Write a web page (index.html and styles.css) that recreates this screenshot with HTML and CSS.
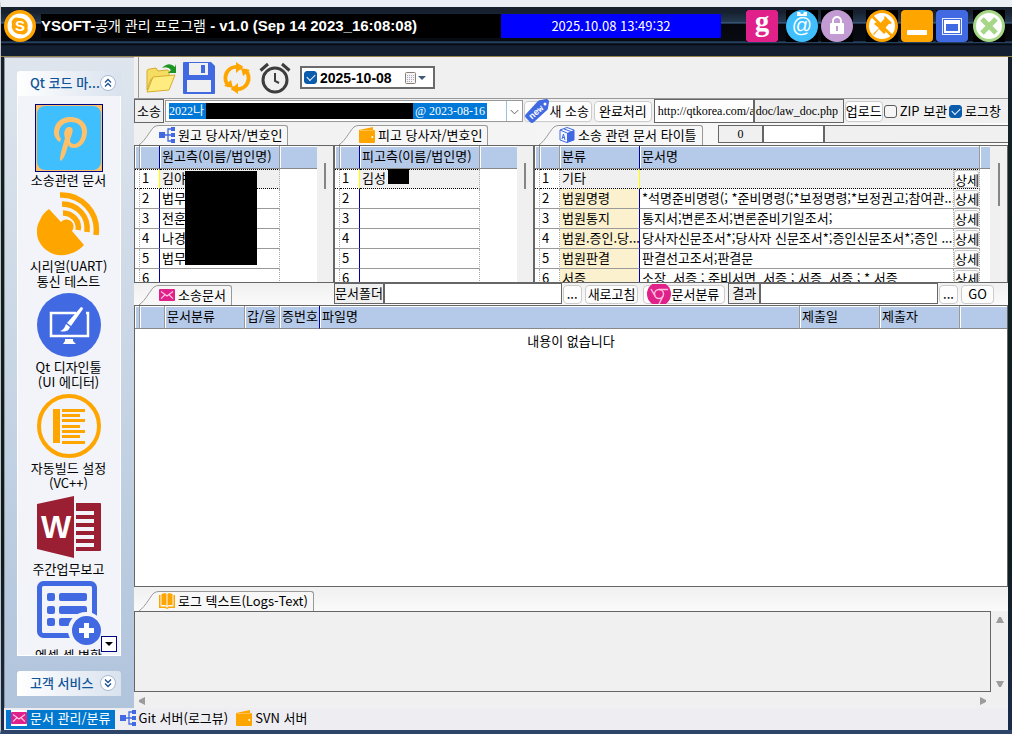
FILE: index.html
```html
<!DOCTYPE html>
<html lang="ko">
<head>
<meta charset="utf-8">
<title>YSOFT-공개 관리 프로그램</title>
<link rel="stylesheet" href="styles.css">
</head>
<body>
<svg class="defs" aria-hidden="true">
  <symbol id="i-tree" viewBox="0 0 16 16"><path fill="#4169e1" d="M0 5h6v6H0zM12 0h4v4h-4zM12 6h4v4h-4zM12 12h4v4h-4z"/><path fill="none" stroke="#4169e1" stroke-width="1.3" d="M6 8h6M12 2H9v12h3"/></symbol>
  <symbol id="i-wallet" viewBox="0 0 16 16"><path fill="#ffa500" d="M0 3 14 0v3h1q1 0 1 1v11q0 1-1 1H1q-1 0-1-1z"/><path stroke="#fff" stroke-width=".6" d="M1 3.6h13" opacity=".6"/><circle cx="13.3" cy="10" r="1" fill="#fff"/></symbol>
  <symbol id="i-mail" viewBox="0 0 16 12"><rect width="16" height="12" rx="1" fill="#e0218a"/><path fill="none" stroke="#ffc9e6" stroke-width="1.1" d="m2 2.500 6 4.500 6-4.500M2 9.700 5.700 6M14 9.700 10.300 6"/></symbol>
  <symbol id="i-book" viewBox="0 0 16 16"><path fill="#ffa500" d="M0 2h1.500v11.500H7L8 15l1-1.500h5.500V2H16v13h-6l-2 1-2-1H0zM2.500 1 6 0l1.500 1v11.500L6 12H2.500zM8.500 1 10 0l3.500 1v11H10l-1.500.5z"/></symbol>
  <symbol id="i-slope" viewBox="0 0 20 20"><path fill="#f7f7f7" d="M0 20C7 15 12 4 15 2q2-1.500 5-1.500V20z"/><path fill="none" stroke="#999" d="M0 20C7 15 12 4 15 2q2-1.500 5-1.500"/></symbol>
</svg>
<div class="window">
  <header class="titlebar">
    <svg class="ic32" viewBox="0 0 32 32"><circle cx="16" cy="16" r="16" fill="#ffa500"/><circle cx="16" cy="16" r="12.500" fill="#fff"/><path fill="#ffa500" d="M8 14a5 5 0 0 1 7-6 8 8 0 0 1 8.500 10 5 5 0 0 1-7 6A8 8 0 0 1 8 14z"/><text x="16" y="21" text-anchor="middle" class="skype">S</text></svg>
    <h1 class="title">YSOFT-<span class="ko">공개 관리 프로그램</span> - v1.0 (Sep 14 2023_16:08:08)</h1>
    <time class="clock">2025.10.08 13:49:32</time>
    <div class="sys">
      <button class="sb" aria-label="Google"><svg class="ic32" viewBox="0 0 32 32"><rect width="32" height="32" rx="3" fill="#e0218a"/><text x="16" y="21" text-anchor="middle" class="gee">g</text></svg></button>
      <button class="sb gap-s" aria-label="메일"><svg class="ic32" viewBox="0 0 32 32"><circle cx="16" cy="16" r="16" fill="#40bfff"/><path fill="#fff" d="M11 2h3l1 2h2l1-2h3v4H11z"/><circle cx="16" cy="17" r="11" fill="#40bfff"/><text x="16" y="22" text-anchor="middle" class="at">@</text></svg></button>
      <button class="sb gap-l" aria-label="잠금"><svg class="ic32" viewBox="0 0 32 32"><circle cx="16" cy="16" r="16" fill="#c39bd3"/><path fill="none" stroke="#fff" stroke-width="2" d="M12 13v-2a4 4 0 0 1 8 0v2"/><rect x="9" y="13" width="14" height="11" rx="1" fill="#fff"/><path stroke="#c39bd3" stroke-width="2" d="M16 16v5"/></svg></button>
      <button class="sb gap-p" aria-label="고정"><svg class="ic32" viewBox="0 0 32 32"><circle cx="16" cy="16" r="14.500" fill="#fff" stroke="#ffa500" stroke-width="3"/><path stroke="#ffa500" stroke-width="2.500" d="m5 5 22 22"/><path fill="#ffa500" d="m19 6 7 7-2 1-1-.3-3.500 4 .3 4.800L18 24l-5-5-5 6-1-1 6-6-5-4 1.500-1.500 5 .5 4-4.500-.5-1z"/></svg></button>
      <button class="sb gap-l" aria-label="최소화"><svg class="ic32" viewBox="0 0 32 32"><rect width="32" height="32" rx="4" fill="#ffa500"/><rect x="6" y="20" width="20" height="5" rx="1" fill="#fff"/></svg></button>
      <button class="sb gap-l" aria-label="최대화"><svg class="ic32" viewBox="0 0 32 32"><rect width="32" height="32" rx="4" fill="#4169e1"/><rect x="6.500" y="8.500" width="19" height="16" fill="none" stroke="#e8eeff"/><path fill="#fff" d="M8 10h16v13H8zM10 14v7h12v-7z" fill-rule="evenodd"/></svg></button>
      <button class="sb gap-m" aria-label="닫기"><svg class="ic32" viewBox="0 0 32 32"><circle cx="16" cy="16" r="14.500" fill="#fff" stroke="#a5d787" stroke-width="3"/><path stroke="#a5d787" stroke-width="5" d="m9 9 14 14M23 9 9 23"/></svg></button>
    </div>
  </header>

  <div class="work">
    <aside class="side">
      <section class="group grow">
        <h2 class="ghead">Qt 코드 마...<button class="round" aria-label="접기"><svg viewBox="0 0 16 16"><circle cx="8" cy="8" r="7.500" fill="#fff" stroke="#a9b9d2"/><path fill="none" stroke="#1d4f91" stroke-width="1.300" d="m5 7.500 3-3 3 3M5 11.500l3-3 3 3"/></svg></button></h2>
        <nav class="items">
          <a class="item" href="#"><svg class="ic64 sel" viewBox="0 0 64 64"><rect width="64" height="64" fill="#ffc06a"/><rect width="64" height="64" rx="8" fill="#40bfff"/><path fill="#ffc06a" d="M23 36c-4-2-6-6-6-10 0-8 6-15 16-15s17 6 17 14c0 10-6 17-13 17-3 0-5-1-6-3-2 8-3 12-7 16l-1-1c0-6 3-14 5-22-2-5 0-11 4-11 7 0 2 9 1 13 0 3 2 4 4 4 5 0 8-6 8-12 0-6-4-10-11-10-8 0-12 5-12 11 0 3 1 4 2 6z"/></svg>소송관련 문서</a>
          <a class="item" href="#"><svg class="ic64" viewBox="0 0 64 64"><path fill="#ffa500" d="m12 17 12 13a7 7 0 0 1 11 9l12 14c-8 9-22 13-33 8C1 55-4 40 3 28c2-5 5-8 9-11z"/><g fill="none" stroke="#ffa500" stroke-width="5.500"><path d="M23 3c22-1 39 18 36 40"/><path d="M25 12c15 0 27 12 25 28"/><path d="M26 21c9 0 17 8 15 17"/></g></svg>시리얼(UART)<br>통신 테스트</a>
          <a class="item" href="#"><svg class="ic64" viewBox="0 0 64 64"><circle cx="32" cy="32" r="32" fill="#4169e1"/><path fill="none" stroke="#fff" stroke-width="2.500" d="M39 20H14v23h37V20h-2"/><path fill="#fff" d="M28 46h8v2l3 3H26l2-3zM44 14q2 0 2 2L34 33l-4-3zM29 31l4 3q-2 6-10 4 4-1 6-7z"/></svg>Qt 디자인툴<br>(UI 에디터)</a>
          <a class="item" href="#"><svg class="ic64" viewBox="0 0 64 64"><circle cx="32" cy="32" r="30" fill="none" stroke="#ffa500" stroke-width="4"/><path fill="#ffa500" d="M16 15h7v34h-7zM25 15h23v3H25zM25 20h18v3H25zM25 25h23v3H25zM25 31h18v3H25zM25 36h23v3H25zM25 41h18v3H25zM25 47h23v3H25z"/></svg>자동빌드 설정<br>(VC++)</a>
          <a class="item" href="#"><svg class="ic64" viewBox="0 0 64 64"><path fill="#9b1f33" d="m0 9 37-8v62L0 54zM39 8h24q1 0 1 1v46q0 1-1 1H39z"/><path fill="#f2f4f9" d="M39 16h18v4H39zM39 24h18v4H39zM39 32h18v4H39zM39 40h18v4H39zM39 48h18v4H39z"/><text x="19" y="43" text-anchor="middle" class="dub">W</text></svg>주간업무보고</a>
          <a class="item" href="#"><svg class="ic64" viewBox="0 0 64 64"><rect x="2.500" y="2.500" width="55" height="52" rx="4" fill="none" stroke="#4169e1" stroke-width="5"/><path fill="#4169e1" d="M12 12h4q2 0 2 2v4q0 2-2 2h-4q-2 0-2-2v-4q0-2 2-2zM24 12h24q2 0 2 2v4q0 2-2 2H24q-2 0-2-2v-4q0-2 2-2zM12 25h4q2 0 2 2v4q0 2-2 2h-4q-2 0-2-2v-4q0-2 2-2zM24 25h24q2 0 2 2v4q0 2-2 2H24q-2 0-2-2v-4q0-2 2-2zM12 37h4q2 0 2 2v4q0 2-2 2h-4q-2 0-2-2v-4q0-2 2-2zM24 37h12v8H24q-2 0-2-2v-4q0-2 2-2z"/><circle cx="49" cy="49" r="18" fill="#f2f4f9"/><circle cx="49.500" cy="49.500" r="14.500" fill="#4169e1"/><path stroke="#fff" stroke-width="5" d="M42 49.500h15M49.500 42v15"/></svg>엑셀 셀 변환</a>
        </nav>
        <button class="more" aria-label="더 보기"><svg viewBox="0 0 14 14"><path d="M3 5h8l-4 4z"/></svg></button>
      </section>
      <h2 class="ghead lone">고객 서비스<button class="round" aria-label="펼치기"><svg viewBox="0 0 16 16"><circle cx="8" cy="8" r="7.500" fill="#fff" stroke="#a9b9d2"/><path fill="none" stroke="#1d4f91" stroke-width="1.300" d="m5 4.500 3 3 3-3M5 8.500l3 3 3-3"/></svg></button></h2>
    </aside>

    <main class="main">
      <div class="toolbar">
        <button class="tb" aria-label="열기"><svg class="ic32" viewBox="0 0 32 32"><path fill="#f5dc62" stroke="#d6ad2c" d="M2 28V9q0-2 3-2l6-1 2 3 9-1q2 0 2 2v5L6 17z"/><path fill="#ffec80" stroke="#d6ad2c" d="m2 30 6-15 22-2-6 15z"/><path fill="#1d9522" d="M17 6q7-7 13-1l1-3v9h-8l3-3q-3-4-9-2z"/></svg></button>
        <button class="tb" aria-label="저장"><svg class="ic32" viewBox="0 0 32 32"><path fill="#4169e1" d="M1 0h27l4 4v27q0 1-1 1H1q-1 0-1-1V1q0-1 1-1z"/><path fill="#f0f0f0" d="M6 1h19v12H6zM4 18h24v12H4z"/><path fill="#4169e1" d="M18 3h4v8h-4z"/></svg></button>
        <button class="tb" aria-label="새로고침"><svg class="ic32" viewBox="0 0 32 32"><g fill="none" stroke="#ffa500" stroke-width="4"><path d="M17 5A11 11 0 0 0 8 24M15 27a11 11 0 0 0 9-19"/><path d="M17 5a11 11 0 0 1 4 1M15 27a11 11 0 0 1-4-1"/></g><path fill="#ffa500" d="m15 0 7 5-7 6zM17 21v11l-7-5zM20 6l9 2-7 6zM12 26l-9-2 7-6z"/></svg></button>
        <button class="tb" aria-label="알람"><svg class="ic32" viewBox="0 0 32 32"><g fill="none" stroke="#3d3d3d" stroke-width="3"><circle cx="16" cy="18" r="12"/><path d="M1.500 8.500 9 2M30.500 8.500 23 2"/><path stroke-width="2" d="M16 11v8l4 2"/></g></svg></button>
        <div class="datebox"><input type="checkbox" class="chk" checked aria-label="날짜 사용"><input class="date" value="2025-10-08" aria-label="날짜"><svg class="cal" viewBox="0 0 22 12"><rect x=".5" y=".5" width="10" height="11" rx="1" fill="#f4f4f6" stroke="#8a8076"/><path stroke="#aab" stroke-dasharray="1 1" d="M2 3.500h7M2 5.500h7M2 7.500h7M2 9.500h5"/><path fill="#40587c" d="M13 4h8l-4 4z"/></svg></div>
      </div>

      <div class="caserow">
        <label class="tag" for="case">소송</label>
        <div class="combo"><select id="case" class="combosel"><option></option></select>
          <span class="combotext"><span class="hl">2022나</span><span class="ink"></span><span class="hl">@ 2023-08-16</span></span>
          <svg class="chev" viewBox="0 0 16 20"><path fill="none" stroke="#555" d="m4 9 4 4 4-4"/></svg></div>
        <button class="btn"><svg class="newtag" viewBox="0 0 24 24"><path fill="#4169e1" d="m1 15 12-13q1-1 3-1l5-1q3 0 3 3l-1 6q0 2-2 3L9 23q-2 2-4 0l-4-4q-2-2 0-4z"/><circle cx="20" cy="5" r="1.500" fill="#fff"/><text x="11" y="16" text-anchor="middle" transform="rotate(-42 11 13)" class="neu">new</text></svg>새 소송</button>
        <button class="btn pad">완료처리</button>
        <input class="url" value="http://qtkorea.com/a" aria-label="주소">
        <span class="path">doc/law_doc.php</span>
        <button class="btn tight">업로드</button>
        <label class="opt"><input type="checkbox" class="chk">ZIP 보관</label>
        <label class="opt"><input type="checkbox" class="chk" checked>로그창</label>
      </div>

      <div class="tabs3">
        <h3 class="tab"><svg class="slope"><use href="#i-slope"/></svg><span class="tabin"><svg class="ic16"><use href="#i-tree"/></svg>원고 당사자/변호인</span></h3>
        <h3 class="tab"><svg class="slope"><use href="#i-slope"/></svg><span class="tabin"><svg class="ic16"><use href="#i-wallet"/></svg>피고 당사자/변호인</span></h3>
        <h3 class="tab"><svg class="slope"><use href="#i-slope"/></svg><span class="tabin"><svg class="ic16" viewBox="0 0 16 16"><path fill="#f4f7ff" stroke="#4169e1" d="m1 3 7-2.500L15 3v10l-7 2.500L1 13z"/><path fill="#4169e1" d="m8 6 7-3v10l-7 2.500z"/><path fill="none" stroke="#4169e1" d="m1 3 7 3M4.500 7 3 12M4.500 7 6 13M3.500 10.500h2M5 2l7 2.500"/></svg>소송 관련 문서 타이틀</span></h3>
        <div class="counter"><span class="num">0</span><input class="numin" aria-label="값"><span class="rest"></span></div>
      </div>

      <div class="grids">
        <div class="pane">
          <table class="grid"><colgroup><col class="c0"><col class="c1"><col class="c120"><col></colgroup>
            <thead><tr><th></th><th class="nv"></th><th>원고측(이름/법인명)</th><th></th></tr></thead>
            <tbody>
              <tr class="cur"><td></td><td class="nv">1</td><td>김야</td><td></td></tr>
              <tr><td></td><td class="nv">2</td><td>법무</td><td></td></tr>
              <tr><td></td><td class="nv">3</td><td>전훈</td><td></td></tr>
              <tr><td></td><td class="nv">4</td><td>나경</td><td></td></tr>
              <tr><td></td><td class="nv">5</td><td>법무</td><td></td></tr>
              <tr><td></td><td class="nv">6</td><td></td><td></td></tr>
            </tbody></table>
          <div class="vbar"><i class="thumb"></i></div>
          <span class="mask big"></span>
        </div>
        <div class="pane">
          <table class="grid"><colgroup><col class="c0"><col class="c1"><col class="c120"><col></colgroup>
            <thead><tr><th></th><th class="nv"></th><th>피고측(이름/법인명)</th><th></th></tr></thead>
            <tbody>
              <tr class="cur"><td></td><td class="nv">1</td><td>김성</td><td></td></tr>
              <tr><td></td><td class="nv">2</td><td></td><td></td></tr>
              <tr><td></td><td class="nv">3</td><td></td><td></td></tr>
              <tr><td></td><td class="nv">4</td><td></td><td></td></tr>
              <tr><td></td><td class="nv">5</td><td></td><td></td></tr>
              <tr><td></td><td class="nv">6</td><td></td><td></td></tr>
            </tbody></table>
          <div class="vbar"><i class="thumb"></i></div>
          <span class="mask small"></span>
        </div>
        <div class="pane">
          <table class="grid"><colgroup><col class="c0"><col class="c1"><col class="c80"><col><col class="c26"><col class="c10"></colgroup>
            <thead><tr><th></th><th></th><th class="nv">분류</th><th colspan="2">문서명</th><th></th></tr></thead>
            <tbody>
              <tr class="cur"><td></td><td>1</td><td class="nv">기타</td><td></td><td class="act"><button class="mini">상세</button></td><td></td></tr>
              <tr><td></td><td>2</td><td class="nv cat">법원명령</td><td>*석명준비명령(; *준비명령(;*보정명령;*보정권고;참여관...</td><td class="act"><button class="mini">상세</button></td><td></td></tr>
              <tr><td></td><td>3</td><td class="nv cat">법원통지</td><td>통지서;변론조서;변론준비기일조서;</td><td class="act"><button class="mini">상세</button></td><td></td></tr>
              <tr><td></td><td>4</td><td class="nv cat">법원.증인.당...</td><td>당사자신문조서*;당사자 신문조서*;증인신문조서*;증인 ...</td><td class="act"><button class="mini">상세</button></td><td></td></tr>
              <tr><td></td><td>5</td><td class="nv cat">법원판결</td><td>판결선고조서;판결문</td><td class="act"><button class="mini">상세</button></td><td></td></tr>
              <tr><td></td><td>6</td><td class="nv cat">서증</td><td>소장&nbsp; 서증 ; 준비서면&nbsp; 서증 ; 서증&nbsp; 서증 ; * 서증</td><td class="act"><button class="mini">상세</button></td><td></td></tr>
            </tbody></table>
          <div class="vbar wide"><i class="thumb tall"></i></div>
        </div>
      </div>

      <div class="docrow">
        <h3 class="tab first"><svg class="slope"><use href="#i-slope"/></svg><span class="tabin"><svg class="ic16"><use href="#i-mail"/></svg>소송문서</span></h3>
        <label class="tag" for="folder">문서폴더</label><input id="folder" class="field">
        <button class="btn dots">...</button>
        <button class="btn">새로고침</button>
        <button class="btn chromebtn"><svg class="chrome" viewBox="0 2 24 20"><circle cx="12" cy="12" r="12" fill="#e0218a"/><g fill="none" stroke="#fbd" stroke-width="1.500"><circle cx="12" cy="12" r="4.500"/><path d="M12 7.500h9M8 14 4 7M16 14l-4 8"/></g></svg>문서분류</button>
        <label class="tag res" for="result">결과</label><input id="result" class="field">
        <button class="btn dots">...</button>
        <button class="btn go">GO</button>
      </div>

      <div class="docs">
        <table class="grid"><colgroup><col class="c0"><col class="c25"><col class="c80"><col class="c35"><col class="c40"><col><col class="c80"><col class="c80"><col class="c47"></colgroup>
          <thead><tr><th></th><th></th><th>문서분류</th><th>갑/을</th><th class="nv">증번호</th><th>파일명</th><th>제출일</th><th>제출자</th><th></th></tr></thead></table>
        <p class="empty">내용이 없습니다</p>
      </div>

      <h3 class="tab logtab"><svg class="slope"><use href="#i-slope"/></svg><span class="tabin"><svg class="ic16"><use href="#i-book"/></svg>로그 텍스트(Logs-Text)</span></h3>
      <div class="log">
        <textarea class="logtext" readonly aria-label="로그"></textarea>
        <div class="arrows"><svg class="arr" viewBox="0 0 10 8"><path fill="#9c9c9c" d="M1 7h8L6 1H4z"/></svg><svg class="arr" viewBox="0 0 10 8"><path fill="#9c9c9c" d="M1 1h8L6 7H4z"/></svg></div>
      </div>
      <div class="hbar"><svg class="arr" viewBox="0 0 10 8"><path fill="#9c9c9c" d="M8 0v8L2 5V3z"/></svg><svg class="arr" viewBox="0 0 10 8"><path fill="#9c9c9c" d="M2 0v8l6-3V3z"/></svg></div>
    </main>
  </div>
  <nav class="foot">
    <a class="ft on" href="#"><svg class="ic16 boxed"><use href="#i-mail"/></svg>문서 관리/분류</a>
    <a class="ft" href="#"><svg class="ic16"><use href="#i-tree"/></svg>Git 서버(로그뷰)</a>
    <a class="ft" href="#"><svg class="ic16"><use href="#i-wallet"/></svg>SVN 서버</a>
  </nav>
</div>
</body>
</html>
```
FILE: styles.css
```css
* { box-sizing: border-box; }
body {
  margin: 0;
  background: #16222e;
  color: #000;
  font: 13px/16px "Noto Sans CJK KR", "Noto Sans", sans-serif;
}
button, input, select, textarea { font: inherit; color: inherit; margin: 0; padding: 0; }
button { border: 0; background: none; white-space: nowrap; }
h1, h2, h3, p { margin: 0; font-size: inherit; font-weight: 400; }
a { color: inherit; text-decoration: none; }
svg { display: block; flex: none; }
.defs { position: absolute; width: 0; height: 0; }

.window {
  display: flex;
  flex-direction: column;
  height: 100vh;
  border-top: 7px solid #eaeff6;
  border-left: 1px solid #c4c4c8;
  border-bottom: 4px solid #2c4568;
  padding-right: 4px;
  background: linear-gradient(#16202f, #11201f 30%, #0e1c1e 75%, #1a2c4c);
}
.ic16 { width: 16px; height: 16px; }
.ic32 { width: 32px; height: 32px; }
.ic64 { width: 64px; height: 64px; }

.titlebar {
  display: flex;
  align-items: flex-start;
  flex: none;
  height: 50px;
  margin-right: -4px;
  padding: 3px 7px 0 3px;
  border-bottom: 1px solid #94834d;
  background: linear-gradient(#16202f 0 5px, #25384f 15px, #446c96 16px, #05070c 17px, #080b12 34px, #31557e 35px, #02050a 37px, #151f32 39px, #151f32);
}
.title {
  flex: 0 1 460px;
  margin: 4px 0 0 5px;
  background: #000;
  color: #fff;
  font: bold 15px/24px "Liberation Sans", "Noto Sans CJK KR", sans-serif;
  white-space: nowrap;
}
.ko { font-size: 14px; font-weight: 400; }
.clock {
  flex: 0 1 220px;
  margin-top: 4px;
  background: #00f;
  color: #fff;
  line-height: 24px;
  text-align: center;
}
.sys { display: flex; margin-left: auto; }
.sb { background: #000; }
.gap-s { margin-left: 8px; }
.gap-l { margin-left: 3px; }
.gap-m { margin-left: 5px; }
.gap-p { margin-left: 13px; }
.skype { font: bold 15px "Liberation Sans", sans-serif; fill: #fff; }
.gee { font: bold 29px/1 "Liberation Serif", serif; fill: #fff; }
.at { font: 20px/1 "Liberation Sans", sans-serif; fill: #fff; }
.dub { font: bold 32px "Liberation Sans", sans-serif; fill: #fff; }
.neu { font: bold 9px "Liberation Mono", monospace; fill: #fff; }

.work { display: flex; flex: 1; min-height: 0; margin-left: 3px; }
.side {
  display: flex;
  flex-direction: column;
  flex: none;
  gap: 15px;
  width: 130px;
  padding: 13px 13px 12px 12px;
  border-left: 1px solid #8e959d;
  border-top: 1px solid #aab;
  background: linear-gradient(#dee5ed, #b0c4dc);
}
.group { position: relative; display: flex; flex-direction: column; min-height: 0; }
.grow { flex: 1; }
.ghead {
  display: flex;
  align-items: center;
  justify-content: space-between;
  flex: none;
  height: 25px;
  padding: 0 5px 1px 13px;
  border-radius: 3px 3px 0 0;
  background: linear-gradient(90deg, #fff, #d9e2ee);
  color: #10549a;
  font-weight: 500;
  white-space: nowrap;
}
.round { flex: none; width: 16px; height: 16px; }
.items {
  flex: 1;
  min-height: 0;
  padding: 10px 1px 0 0;
  overflow: hidden;
  border: 1px solid #fff;
  border-top: 0;
  background: #f2f4f9;
}
.item {
  display: block;
  margin-bottom: 5px;
  line-height: 15px;
  text-align: center;
  white-space: nowrap;
}
.item .ic64 { margin: 0 auto 2px; }
.sel { outline: 1px solid #000080; outline-offset: 1px; box-shadow: 0 0 0 1px #ffc06a; }
.more {
  position: absolute;
  right: 4px;
  bottom: 4px;
  width: 16px;
  height: 16px;
  border: 1px solid #000080;
  background: #fff;
}

.main { display: flex; flex-direction: column; flex: 1; min-width: 0; background: #f0f0f0; }
.toolbar {
  display: flex;
  align-items: center;
  gap: 6px;
  flex: none;
  height: 41px;
  padding-left: 6px;
  margin-left: 4px;
  border-left: 1px solid #999;
}
.datebox {
  display: flex;
  align-items: center;
  gap: 3px;
  width: 135px;
  height: 23px;
  margin-left: 3px;
  padding: 0 6px 0 2px;
  border: 2px solid #6b6b6b;
  background: #fff;
}
.date { flex: 1; min-width: 0; border: 0; font: bold 14px/16px "Liberation Sans", sans-serif; }
.cal { width: 22px; height: 12px; }
.chk {
  appearance: none;
  flex: none;
  width: 13px;
  height: 13px;
  border: 1px solid #5c5c5c;
  border-radius: 3px;
  background: #f6f6f6;
}
.chk:checked { border-color: #0b5cad; background: #0b5cad; display: grid; place-items: center; }
.chk:checked::after {
  content: "";
  width: 7px;
  height: 4px;
  border: solid #fff;
  border-width: 0 0 1px 1px;
  transform: translateY(-1px) rotate(-45deg);
}

.caserow {
  display: flex;
  align-items: center;
  gap: 1px;
  flex: none;
  height: 25px;
  border-top: 1px solid #999;
  white-space: nowrap;
}
.tag {
  display: flex;
  align-items: center;
  justify-content: center;
  flex: none;
  align-self: stretch;
  padding: 0 2px;
  border: 1px solid #666;
  background: #f0f0f0;
}
.combo { position: relative; flex: 1; min-width: 0; height: 22px; border: 1px solid #999; background: #fff; }
.combosel { position: absolute; inset: 0; width: 100%; height: 100%; appearance: none; border: 0; background: none; }
.combotext {
  display: flex;
  align-items: center;
  position: relative;
  width: 321px;
  height: 100%;
  padding-left: 3px;
  pointer-events: none;
  font: 12px/16px "Liberation Serif", "Noto Sans CJK KR", serif;
}
.hl { padding-right: 2px; background: #0078d7; color: #fff; }
.hl:last-child { padding: 0 2px; }
.ink { flex: 1; height: 16px; background: #000; }
.chev { position: absolute; right: 0; top: 0; width: 16px; height: 20px; border-left: 1px solid #9ec3d6; pointer-events: none; }
.btn {
  display: flex;
  align-items: center;
  justify-content: center;
  flex: none;
  height: 21px;
  padding: 0 2px 1px;
  border: 1px solid #ccc;
  border-radius: 4px;
  background: #fdfdfd;
}
.pad { margin: 0 1px; padding: 0 4px 1px; }
.tight { padding: 0 0 1px; }
.newtag { width: 24px; height: 24px; margin-left: -2px; }
.url, .path {
  flex: none;
  align-self: stretch;
  width: 100px;
  border: 1px solid #666;
  font: 12px/22px "Liberation Serif", serif;
}
.url { padding-left: 3px; background: #fff; }
.path { width: 90px; margin-left: -1px; padding-left: 1px; }
.opt { display: flex; align-items: center; gap: 3px; flex: none; margin-right: 1px; }
.opt:last-child { margin-right: 7px; }

.tabs3 {
  display: grid;
  grid-template-columns: 200px 200px 180px 1fr;
  align-items: end;
  flex: none;
  height: 22px;
  background: linear-gradient(90deg, #f0f0f0, #fafafa);
}
.tab { display: flex; height: 20px; padding-left: 5px; }
.slope { width: 20px; height: 20px; }
.tabin {
  display: flex;
  align-items: center;
  gap: 3px;
  padding: 0 5px 1px 0;
  border-top: 1px solid #999;
  border-right: 1px solid #999;
  border-radius: 0 3px 0 0;
  background: #f7f7f7;
  white-space: nowrap;
}
.counter { display: flex; align-self: start; height: 18px; margin: 2px 0 0 4px; }
.num, .numin, .rest { border: 1px solid #666; background: #f0f0f0; }
.num { width: 45px; text-align: center; font: 12px/16px "Liberation Serif", serif; }
.numin { width: 61px; background: #fff; }
.rest { flex: 1; border-right: 0; }

.grids { display: grid; grid-template-columns: 200px 200px 1fr; flex: none; height: 138px; }
.pane {
  position: relative;
  display: flex;
  min-width: 0;
  overflow: hidden;
  border: 1px solid #666;
  background: #fff;
}
.grid { flex: 1; width: 100%; min-width: 0; align-self: flex-start; table-layout: fixed; border-collapse: separate; border-spacing: 0; }
.c0 { width: 5px; }
.c1 { width: 20px; }
.c10 { width: 10px; }
.c25 { width: 25px; }
.c26 { width: 26px; }
.c35 { width: 35px; }
.c40 { width: 40px; }
.c47 { width: 47px; }
.c80 { width: 80px; }
.c120 { width: 120px; }
.grid th {
  height: 23px;
  padding: 0 2px 2px;
  border-right: 1px solid #999;
  border-bottom: 1px solid #888;
  box-shadow: inset 1px 1px #fff;
  background: #b5cae8;
  font-weight: 400;
  text-align: left;
  white-space: nowrap;
}
.grid th:last-child { border-right: 0; }
.grid td {
  height: 20px;
  padding: 0 2px 2px;
  border-right: 1px dotted #aaa;
  border-bottom: 1px solid #999;
  line-height: 16px;
  white-space: nowrap;
  overflow: hidden;
}
.grid td:last-child { border: 0; background: #fff; }
.grid td.cat { background: #fbf1cf; }
.grid th.nv, .grid td.nv { border-right: 1px solid #0000b0; }
.grid .cur td { border-top: 1px dotted #000; border-bottom: 1px dotted #000; background: #f0f0f0; }
.grid .cur td:nth-child(-n+2), .grid .cur td:last-child { background: #fff; }
.grid .cur td:last-child { border: 0; }
.grid .cur td.nv { border-right-color: #ff0; }
.grid td.act { padding: 0; }
.mini { display: block; width: 25px; height: 18px; border: 1px solid #ccc; border-radius: 3px; background: #fdfdfd; line-height: 15px; }
.vbar { flex: none; width: 16px; background: #f0f0f0; }
.wide { width: 17px; }
.thumb { display: block; width: 2px; height: 26px; margin: 17px 0 0 7px; background: #858585; }
.tall { height: 43px; margin-left: 8px; }
.mask { position: absolute; background: #000; }
.big { left: 50px; top: 25px; width: 72px; height: 94px; }
.small { left: 53px; top: 23px; width: 21px; height: 15px; }

.docrow {
  display: flex;
  align-items: center;
  flex: none;
  height: 22px;
  padding-right: 14px;
  background: linear-gradient(#f0f0f0, #fafafa);
}
.first { flex: none; width: 200px; align-self: flex-end; }
.docrow .tag, .field { align-self: flex-start; height: 21px; }
.field { flex: 1; min-width: 0; border: 1px solid #666; background: #fff; }
.docrow .tag { padding: 0 0 1px; }
.docrow .res { padding: 0 3px 1px; }
.docrow .btn { height: 19px; margin-left: 3px; }
.docrow .dots { width: 19px; margin-left: 1px; }
.docrow .chromebtn { margin: 0 3px 0 5px; padding: 0 5px 1px 3px; }
.chrome { width: 24px; height: 20px; }
.docrow .go { width: 33px; }

.docs { flex: 1; min-height: 0; border: 1px solid #666; background: #fff; }
.empty { padding-top: 4px; text-align: center; }
.logtab { flex: none; height: 24px; padding-top: 4px; background: linear-gradient(#f0f0f0, #fafafa); }
.log { display: flex; flex: none; height: 81px; }
.logtext { flex: 1; resize: none; border: 1px solid #666; background: #f0f0f0; }
.arrows { display: flex; flex-direction: column; justify-content: space-between; align-items: center; width: 17px; padding: 5px 0 4px; }
.arr { width: 10px; height: 8px; }
.hbar { display: flex; align-items: center; justify-content: space-between; flex: none; height: 16px; padding: 2px 20px 0 3px; }

.foot {
  display: flex;
  align-items: center;
  gap: 5px;
  flex: none;
  height: 22px;
  margin-left: 3px;
  padding-left: 2px;
  background: #eeedf2;
}
.ft { display: flex; align-items: center; gap: 3px; height: 19px; padding: 0 3px 2px 0; }
.on { padding: 0 4px 2px 5px; background: #0078d0; color: #fff; }
.boxed { background: #fff; }
```
